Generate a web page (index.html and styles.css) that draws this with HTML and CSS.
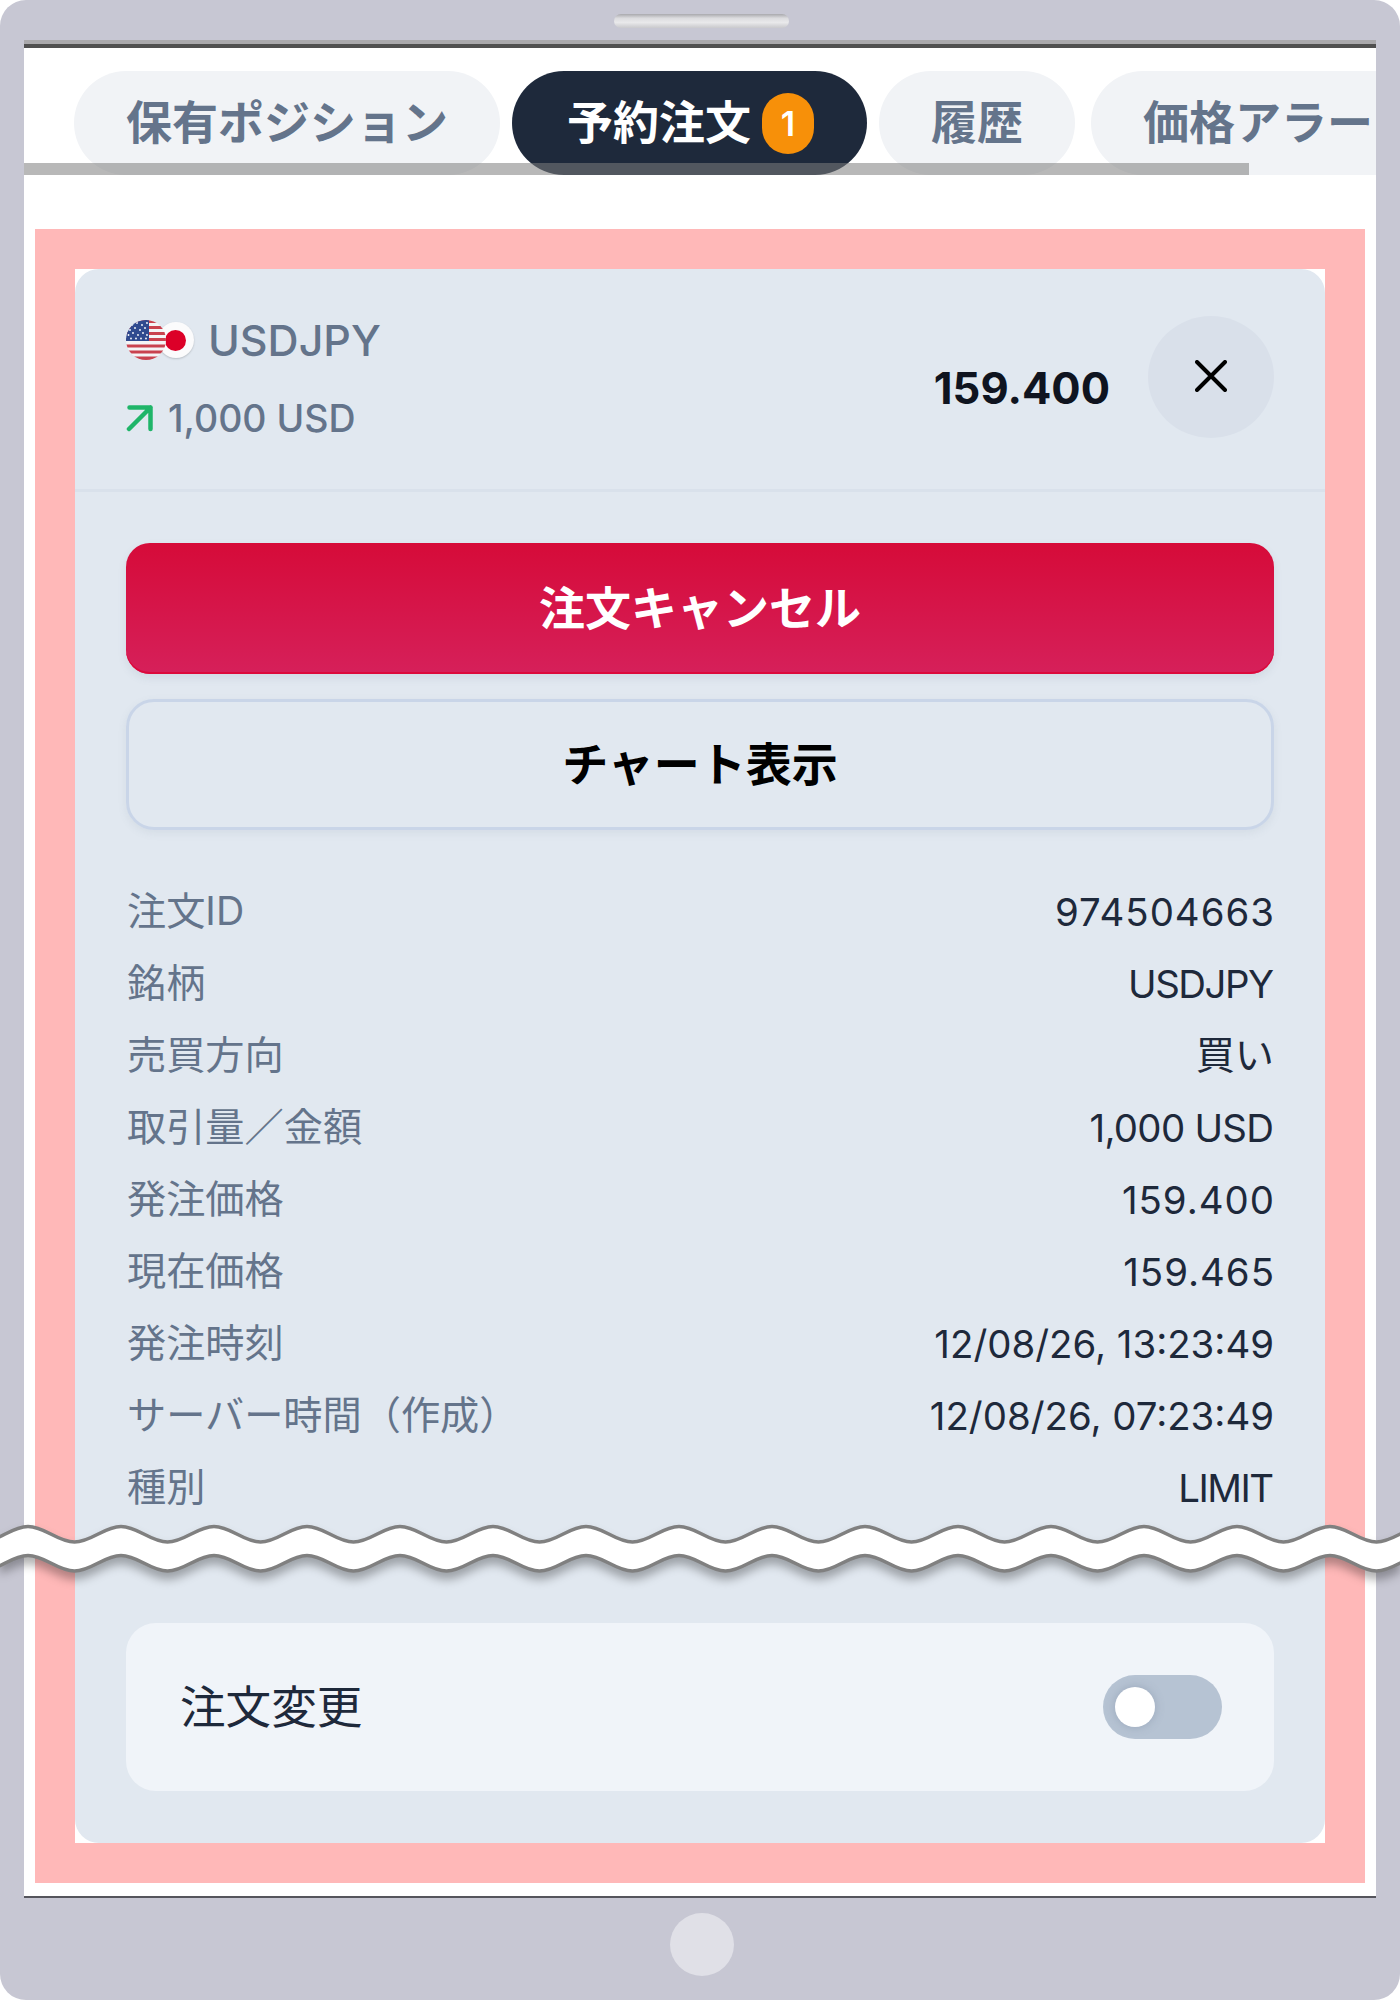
FILE: index.html
```html
<!DOCTYPE html>
<html lang="ja">
<head>
<meta charset="utf-8">
<title>予約注文</title>
<link rel="stylesheet" href="styles.css">
</head>
<body>
<div class="device">
  <div class="bezel-top"><div class="speaker"></div></div>
  <div class="screen">
    <nav class="tabs">
      <div class="tab">保有ポジション</div>
      <div class="tab tab-active">予約注文<span class="badge">1</span></div>
      <div class="tab">履歴</div>
      <div class="tab tab-last">価格アラート</div>
      <div class="scrollbar"></div>
    </nav>
    <div class="frame">
      <section class="card">
        <header class="card-head">
          <div class="instrument">
            <div class="symbol-row">
              <div class="flags">
                <svg class="flag-us" width="40" height="40" viewBox="0 0 40 40">
                  <defs><clipPath id="c"><circle cx="20" cy="20" r="20"/></clipPath></defs>
                  <g clip-path="url(#c)">
                    <rect width="40" height="40" fill="#f4f4f6"/>
                    <g fill="#c9424f">
                      <rect y="0" width="40" height="3"/><rect y="6" width="40" height="3"/><rect y="12" width="40" height="3"/>
                      <rect y="18" width="40" height="3"/><rect y="24.5" width="40" height="3"/><rect y="30.5" width="40" height="3"/><rect y="36.5" width="40" height="3.5"/>
                    </g>
                    <rect width="23" height="21" fill="#2f4a8f"/>
                    <g fill="#fff">
                      <circle cx="6" cy="5" r=".9"/><circle cx="11" cy="3" r=".9"/><circle cx="16" cy="5" r=".9"/><circle cx="21" cy="3" r=".9"/>
                      <circle cx="4" cy="10" r=".9"/><circle cx="9" cy="8" r=".9"/><circle cx="14" cy="10" r=".9"/><circle cx="19" cy="8" r=".9"/>
                      <circle cx="2.5" cy="15" r=".9"/><circle cx="7" cy="13" r=".9"/><circle cx="12" cy="15" r=".9"/><circle cx="17" cy="13" r=".9"/><circle cx="21" cy="15" r=".9"/>
                      <circle cx="5" cy="18.5" r=".9"/><circle cx="10" cy="18.5" r=".9"/><circle cx="15" cy="18.5" r=".9"/><circle cx="20" cy="18.5" r=".9"/>
                    </g>
                  </g>
                </svg>
                <span class="flag-jp"><span class="flag-jp-sun"></span></span>
              </div>
              <span class="symbol">USDJPY</span>
            </div>
            <div class="size-row">
              <svg class="arrow" width="28" height="28" viewBox="0 0 28 28" fill="none" stroke="#1fb569" stroke-width="4.5" stroke-linecap="round" stroke-linejoin="round">
                <path d="M3 25 L24.5 3.500 M3.500 3.500 H24.500 V25"/>
              </svg>
              <span class="size">1,000 USD</span>
            </div>
          </div>
          <div class="price">159.400</div>
          <button class="close" type="button" aria-label="閉じる">
            <svg width="32" height="32" viewBox="0 0 32 32" fill="none" stroke="#000" stroke-width="4" stroke-linecap="round"><path d="M2 2 L30 30 M30 2 L2 30"/></svg>
          </button>
        </header>
        <div class="card-body">
          <button class="btn btn-cancel" type="button">注文キャンセル</button>
          <button class="btn btn-chart" type="button">チャート表示</button>
          <dl class="details">
            <div class="row"><dt>注文ID</dt><dd class="v-wide">974504663</dd></div>
            <div class="row"><dt>銘柄</dt><dd class="v-tight">USDJPY</dd></div>
            <div class="row"><dt>売買方向</dt><dd class="v-cjk">買い</dd></div>
            <div class="row"><dt>取引量／金額</dt><dd class="v-slight">1,000 USD</dd></div>
            <div class="row"><dt>発注価格</dt><dd class="v-wide">159.400</dd></div>
            <div class="row"><dt>現在価格</dt><dd class="v-wide">159.465</dd></div>
            <div class="row"><dt>発注時刻</dt><dd>12/08/26, 13:23:49</dd></div>
            <div class="row"><dt>サーバー時間（作成）</dt><dd>12/08/26, 07:23:49</dd></div>
            <div class="row"><dt>種別</dt><dd class="v-tight">LIMIT</dd></div>
          </dl>
          <div class="modify">
            <span class="modify-label">注文変更</span>
            <span class="toggle"><span class="knob"></span></span>
          </div>
        </div>
      </section>
    </div>
  </div>
  <div class="bezel-bottom"><div class="home"></div></div>
  <svg class="tear" width="1400" height="90" viewBox="0 0 1400 90">
    <path class="tear-fill" d="M-18.5 32 c17 0 29.5 -15.5 46.5 -15.5 s29.500 15.500 46.500 15.500 c17 0 29.5 -15.5 46.5 -15.500 s29.500 15.500 46.500 15.500 c17 0 29.5 -15.5 46.5 -15.500 s29.500 15.500 46.500 15.500 c17 0 29.5 -15.5 46.5 -15.500 s29.500 15.500 46.500 15.500 c17 0 29.5 -15.5 46.5 -15.500 s29.500 15.500 46.500 15.500 c17 0 29.5 -15.5 46.5 -15.500 s29.500 15.500 46.500 15.500 c17 0 29.5 -15.5 46.5 -15.500 s29.500 15.500 46.500 15.500 c17 0 29.5 -15.5 46.5 -15.500 s29.500 15.500 46.500 15.500 c17 0 29.5 -15.5 46.5 -15.500 s29.500 15.500 46.500 15.500 c17 0 29.5 -15.5 46.5 -15.500 s29.500 15.500 46.500 15.500 c17 0 29.5 -15.5 46.5 -15.500 s29.500 15.500 46.500 15.500 c17 0 29.5 -15.5 46.5 -15.500 s29.500 15.500 46.500 15.500 c17 0 29.5 -15.5 46.5 -15.500 s29.500 15.500 46.500 15.500 c17 0 29.5 -15.5 46.5 -15.500 s29.500 15.500 46.500 15.500 c17 0 29.5 -15.5 46.5 -15.500 s29.500 15.500 46.500 15.500 c17 0 29.5 -15.5 46.5 -15.500 s29.500 15.500 46.500 15.500 l0 29 c-17 0 -29.5 -15.5 -46.5 -15.500 s-29.500 15.500 -46.500 15.500 c-17 0 -29.5 -15.5 -46.5 -15.500 s-29.500 15.500 -46.500 15.500 c-17 0 -29.5 -15.5 -46.5 -15.500 s-29.500 15.500 -46.500 15.500 c-17 0 -29.5 -15.5 -46.5 -15.500 s-29.500 15.500 -46.500 15.500 c-17 0 -29.5 -15.5 -46.5 -15.500 s-29.500 15.500 -46.500 15.500 c-17 0 -29.5 -15.5 -46.5 -15.500 s-29.500 15.500 -46.500 15.500 c-17 0 -29.5 -15.5 -46.5 -15.500 s-29.500 15.500 -46.500 15.500 c-17 0 -29.5 -15.5 -46.5 -15.500 s-29.500 15.500 -46.500 15.500 c-17 0 -29.5 -15.5 -46.5 -15.500 s-29.500 15.500 -46.500 15.500 c-17 0 -29.5 -15.5 -46.5 -15.500 s-29.500 15.500 -46.500 15.500 c-17 0 -29.5 -15.5 -46.5 -15.500 s-29.500 15.500 -46.500 15.500 c-17 0 -29.5 -15.5 -46.5 -15.500 s-29.500 15.500 -46.500 15.500 c-17 0 -29.5 -15.5 -46.5 -15.500 s-29.500 15.500 -46.500 15.500 c-17 0 -29.5 -15.5 -46.5 -15.500 s-29.500 15.500 -46.500 15.500 c-17 0 -29.5 -15.5 -46.5 -15.500 s-29.500 15.500 -46.500 15.500 c-17 0 -29.5 -15.5 -46.5 -15.500 s-29.500 15.500 -46.500 15.500 z"/>
  </svg>
</div>
</body>
</html>
```
FILE: styles.css
```css
* { box-sizing: border-box; }
html, body { margin: 0; padding: 0; background: #fff; }
body { font-family: Inter, "Noto Sans CJK JP", sans-serif; }

.device {
  position: relative;
  width: 1400px;
  height: 2000px;
  padding: 0 24px;
  display: flex;
  flex-direction: column;
  background: #c7c7d3;
  border-radius: 26px;
  overflow: hidden;
}

.bezel-top { height: 40px; padding: 14px 0 0 3px; flex: none; }
.speaker {
  width: 175px;
  height: 14px;
  margin: 0 auto;
  border-radius: 7px;
  background: linear-gradient(180deg, #a9a9ad 0%, #dcdcdf 30%, #e9e9eb 60%, #c9c9cc 100%);
}

.screen {
  height: 1858px;
  flex: none;
  background: #fff;
  border-top: 4px solid #aaa9ac;
  border-bottom: 2px solid #55555c;
  box-shadow: inset 0 4px 0 #505050;
  padding-top: 27px;
}

.tabs {
  position: relative;
  display: flex;
  gap: 12px;
  height: 104px;
  padding-left: 50px;
  overflow: hidden;
}
.tab {
  flex: none;
  height: 104px;
  padding: 0 52px 8px;
  display: flex;
  align-items: center;
  border-radius: 52px;
  background: #f1f3f6;
  color: #64748b;
  font-size: 46px;
  font-weight: 700;
}
.tab-active {
  padding: 0 53px 8px 55px;
  background: #1e293b;
  color: #fff;
}
.tab-last { margin-left: 4px; }
.badge {
  width: 52px;
  height: 61px;
  margin: 8px 0 0 11px;
  display: flex;
  align-items: center;
  justify-content: center;
  border-radius: 26px;
  background: #f79009;
  color: #fff;
  font-size: 34px;
  font-weight: 600;
}
.scrollbar {
  position: absolute;
  left: 0;
  bottom: 0;
  width: 1225px;
  height: 12px;
  background: rgba(125, 125, 125, .55);
}

.frame {
  margin: 54px 11px 0;
  border: 40px solid #ffb8b8;
  background: #fff;
}
.card {
  height: 1574px;
  border-radius: 24px;
  background: #e1e8f0;
}

.card-head {
  height: 223px;
  padding: 0 51px;
  display: flex;
  align-items: flex-start;
  border-bottom: 3px solid #d9e1eb;
}
.instrument { flex: 1; padding-top: 51px; }
.symbol-row { display: flex; align-items: center; height: 40px; }
.flags { display: flex; align-items: center; }
.flag-us { position: relative; z-index: 1; display: block; }
.flag-jp {
  width: 36px;
  height: 36px;
  margin-left: -8px;
  display: flex;
  align-items: center;
  justify-content: center;
  border-radius: 50%;
  background: #fbfbfc;
  box-shadow: 0 1px 2px rgba(0, 0, 0, .18);
}
.flag-jp-sun {
  width: 21px;
  height: 21px;
  border-radius: 50%;
  background: #dc0028;
  transform: translateX(-1px);
}
.symbol {
  margin-left: 14px;
  color: #64748b;
  font-size: 43px;
  font-weight: 500;
}
.size-row { display: flex; align-items: center; height: 40px; margin-top: 38px; }
.arrow { display: block; margin-right: 14px; }
.size { color: #64748b; font-size: 37.5px; font-weight: 500; }

.price {
  margin-top: 95px;
  margin-right: 38px;
  color: #0f1420;
  font-size: 43.5px;
  font-weight: 700;
  line-height: 48px;
}
.close {
  width: 126px;
  height: 122px;
  margin-top: 47px;
  padding: 0 0 2px;
  display: flex;
  align-items: center;
  justify-content: center;
  border: 0;
  border-radius: 50%;
  background: #d9e0ea;
}
.close svg { display: block; }

.card-body { padding: 51px 51px 0; }
.btn {
  display: flex;
  align-items: center;
  justify-content: center;
  width: 100%;
  padding: 0 0 8px;
  font-family: inherit;
  font-size: 46px;
  font-weight: 700;
}
.btn-cancel {
  height: 131px;
  border: 0;
  border-radius: 24px;
  background: linear-gradient(180deg, #d60b39 0%, #d6205a 100%);
  box-shadow: inset 0 -2px 0 #dc0a3c, 0 4px 8px rgba(100, 116, 139, .12);
  color: #fff;
}
.btn-chart {
  height: 131px;
  margin-top: 25px;
  border: 3px solid #c9d5e8;
  border-radius: 28px;
  background: transparent;
  box-shadow: 0 3px 8px rgba(100, 116, 139, .1);
  color: #000;
}

.details { margin: 44px 0 0; }
.row {
  display: flex;
  justify-content: space-between;
  align-items: center;
  height: 72px;
}
.row dt { padding: 0 0 4px 1px; color: #64748b; font-size: 39.2px; }
.row dd { margin: 0; padding-top: 3px; color: #1e293b; font-size: 38.4px; }
.row .v-wide { margin-right: -1px; letter-spacing: 1px; }
.row .v-tight { margin-right: 1.500px; letter-spacing: -1.500px; }
.row .v-slight { margin-right: .7px; letter-spacing: -.7px; }
.row .v-cjk { padding: 0 0 4px; font-size: 39.2px; }

.modify {
  height: 168px;
  margin-top: 101px;
  padding: 0 52px 0 54px;
  display: flex;
  align-items: center;
  justify-content: space-between;
  border-radius: 30px;
  background: #f0f4f9;
}
.modify-label { padding-bottom: 6px; color: #1e293b; font-size: 45.6px; }
.toggle {
  width: 119px;
  height: 64px;
  padding: 12px;
  border-radius: 32px;
  background: #b6c3d3;
}
.knob {
  display: block;
  width: 40px;
  height: 40px;
  border-radius: 50%;
  background: #fff;
  box-shadow: 0 0 10px rgba(100, 116, 139, .35);
}

.bezel-bottom { flex: 1; display: flex; justify-content: center; padding: 15px 0 0 4px; }
.home { width: 64px; height: 63px; border-radius: 50%; background: #e0e0e7; }

.tear { position: absolute; left: 0; top: 1510px; display: block; filter: drop-shadow(0 7px 5px rgba(0, 0, 0, .3)); }
.tear-fill { fill: #fff; stroke: #808080; stroke-width: 3.5; }
```
